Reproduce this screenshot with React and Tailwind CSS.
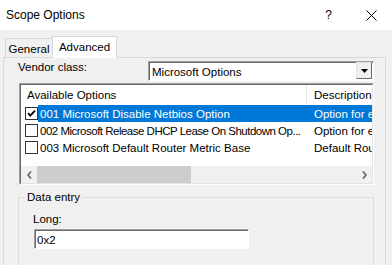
import React from 'react';

const rows = [
  { id: 1, text: '001 Microsoft Disable Netbios Option', desc: 'Option for enabling or disabling NetBIOS', checked: true, selected: true, tight: false },
  { id: 2, text: '002 Microsoft Release DHCP Lease On Shutdown Op...', desc: 'Option for enabling release of lease', checked: false, selected: false, tight: true },
  { id: 3, text: '003 Microsoft Default Router Metric Base', desc: 'Default Router Metric Base', checked: false, selected: false, tight: false },
];

function CheckBox({ checked }) {
  return (
    <svg width="13" height="13" viewBox="0 0 13 13" className="block">
      <rect x="0.5" y="0.5" width="12" height="12" fill="#fff" stroke="#333" />
      {checked && <path d="M3 6.2 L5.3 8.6 L10 3.6" fill="none" stroke="#000" strokeWidth="1.8" />}
    </svg>
  );
}

function Sunken({ className = '', children }) {
  return (
    <div className={`overflow-hidden border border-t-[#a0a0a0] border-l-[#a0a0a0] border-r-white border-b-white ${className}`}>
      <div className="h-full overflow-hidden border border-t-[#696969] border-l-[#696969] border-r-[#e3e3e3] border-b-[#e3e3e3] bg-white">
        {children}
      </div>
    </div>
  );
}

export default function App() {
  return (
    <div className="w-[392px] h-[265px] overflow-hidden bg-[#f0f0f0] flex flex-col text-black font-['Liberation_Sans',Arial,sans-serif] text-[11.5px] leading-[12px]">
      {/* title bar */}
      <div className="h-[30px] bg-white flex items-center shrink-0">
        <span className="pl-[6px] text-[12px]">Scope Options</span>
        <span className="ml-auto text-[12px] mr-[34px]">?</span>
        <svg width="11" height="11" viewBox="0 0 11 11" className="mr-[15px]">
          <path d="M0.5 0.5 L10.5 10.5 M10.5 0.5 L0.5 10.5" stroke="#000" strokeWidth="1" />
        </svg>
      </div>

      {/* tabs */}
      <div className="h-[6px] shrink-0" />
      <div className="h-[21px] pl-[5px] flex items-end shrink-0">
        <div className="h-[19px] w-[47px] border border-r-0 border-b-0 border-[#d9d9d9] bg-[#f0f0f0] flex items-center justify-center pt-px">
          General
        </div>
        <div className="relative z-10 h-[22px] w-[65px] -mb-px border border-b-0 border-[#d9d9d9] bg-white flex items-start justify-center pt-[4px]">
          Advanced
        </div>
      </div>

      {/* page */}
      <div className="ml-[3px] w-[383px] flex-1 border border-[#d9d9d9] bg-[#f0f0f0] flex flex-col">
        <div className="flex pt-[3px]">
          <div className="w-[144px] shrink-0 pl-[14px]">Vendor class:</div>
          <div className="w-[226px] h-[20px] shrink-0 border border-t-[#a0a0a0] border-l-[#a0a0a0] border-r-white border-b-white shadow-[inset_1px_1px_0_#696969] bg-white flex items-center">
            <span className="pl-[3px] pt-px">Microsoft Options</span>
            <div className="ml-auto mr-[1px] mt-[-1px] w-[16px] h-[17px] border border-t-[#e3e3e3] border-l-[#e3e3e3] border-r-[#696969] border-b-[#696969] bg-[#f0f0f0] flex items-center justify-center">
              <svg width="7" height="4" viewBox="0 0 7 4">
                <path d="M0 0 H7 L3.5 4 Z" fill="#000" />
              </svg>
            </div>
          </div>
        </div>

        {/* list */}
        <Sunken className="ml-[15px] mt-[2px] w-[355px] h-[102px] shrink-0">
          <div className="w-[351px] h-full flex flex-col overflow-hidden">
            <div className="w-[351px] h-[20px] flex items-center shrink-0">
              <div className="w-[286px] shrink-0 h-full border-r border-[#e5e5e5] pl-[6px] flex items-center">Available Options</div>
              <div className="w-[65px] shrink-0 pl-[7px] whitespace-nowrap overflow-hidden">Description</div>
            </div>
            {rows.map((r) => (
              <div key={r.id} className="w-[351px] h-[17px] flex items-center shrink-0">
                <div className="w-[17px] pl-[4px] shrink-0">
                  <CheckBox checked={r.checked} />
                </div>
                <div className={`w-[334px] h-full flex items-center overflow-hidden ${r.selected ? 'bg-[#0078d7] text-white' : ''}`}>
                  <div className={`w-[269px] pl-[2px] shrink-0 whitespace-nowrap overflow-hidden ${r.tight ? 'tracking-[-0.5px]' : ''}`}>{r.text}</div>
                  <div className="w-[65px] shrink-0 pl-[7px] whitespace-nowrap overflow-hidden">{r.desc}</div>
                </div>
              </div>
            ))}
            <div className="flex-1" />
            <div className="w-[351px] h-[17px] bg-[#f0f0f0] flex items-center shrink-0">
              <div className="w-[16px] h-full flex items-center justify-center">
                <svg width="5" height="8" viewBox="0 0 5 8">
                  <path d="M4 0.5 L1 4 L4 7.5" fill="none" stroke="#606060" strokeWidth="1.6" />
                </svg>
              </div>
              <div className="w-[154px] h-full bg-[#cdcdcd]" />
              <div className="ml-auto w-[16px] h-full flex items-center justify-center">
                <svg width="5" height="8" viewBox="0 0 5 8">
                  <path d="M1 0.5 L4 4 L1 7.5" fill="none" stroke="#606060" strokeWidth="1.6" />
                </svg>
              </div>
            </div>
          </div>
        </Sunken>

        {/* data entry group */}
        <fieldset className="ml-[14px] mt-[6px] w-[356px] h-[90px] border border-[#dcdcdc] shrink-0">
          <legend className="ml-[6px] px-[2px] leading-[12px]">Data entry</legend>
          <div className="pl-[14px] pt-[10px]">Long:</div>
          <div className="ml-[15px] mt-[4px] w-[215px] h-[20px] border border-t-[#a0a0a0] border-l-[#a0a0a0] border-r-white border-b-white shadow-[inset_1px_1px_0_#696969] bg-white flex items-center">
            <span className="pl-[2px] pt-px">0x2</span>
          </div>
        </fieldset>
      </div>
    </div>
  );
}
